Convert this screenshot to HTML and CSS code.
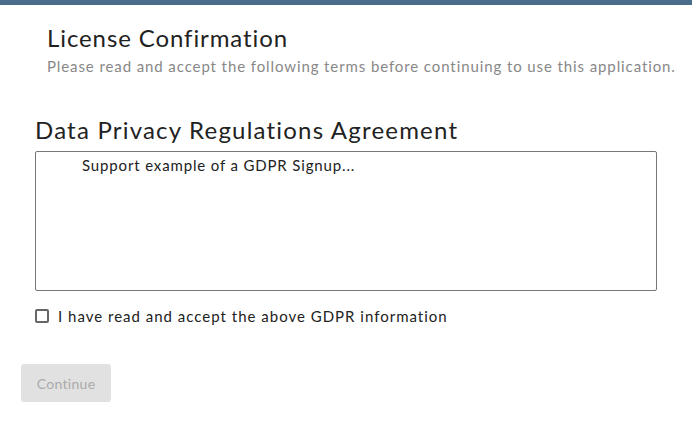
FILE: index.html
```html
<!DOCTYPE html>
<html lang="en">
<head>
  <meta charset="UTF-8">
  <meta name="viewport" content="width=device-width, initial-scale=1">
  <title>License Confirmation</title>
  <link rel="stylesheet" href="styles.css">
</head>
<body>
  <div class="topbar"></div>
  <div class="page">
    <div class="header">
      <h1>License Confirmation</h1>
      <p class="subtitle">Please read and accept the following terms before continuing to use this application.</p>
    </div>
    <div class="agreement">
      <h2>Data Privacy Regulations Agreement</h2>
      <div class="terms-box">
        <p>Support example of a GDPR Signup...</p>
      </div>
      <label class="accept">
        <input type="checkbox" class="accept-check">
        <span>I have read and accept the above GDPR information</span>
      </label>
    </div>
    <button class="continue-btn" disabled>Continue</button>
  </div>
</body>
</html>
```
FILE: styles.css
```css
body {
  margin: 0;
  font-family: Lato, 'Open Sans', sans-serif;
  color: #222;
  background: #fff;
}

.topbar {
  height: 5px;
  background-color: #4a6d8c;
}

.page {
  padding: 0 35px 0 21px;
}

.header {
  padding-left: 26px;
}

h1 {
  margin: 0;
  padding-top: 18px;
  font-size: 24px;
  font-weight: normal;
  line-height: 30px;
  letter-spacing: 0.9px;
}

.subtitle {
  margin: 3px 0 0;
  font-size: 15px;
  line-height: 20px;
  color: #888;
  letter-spacing: 0.9px;
  white-space: nowrap;
}

.agreement {
  padding-left: 14px;
  margin-top: 39px;
}

h2 {
  margin: 0;
  font-size: 24px;
  font-weight: normal;
  line-height: 30px;
  letter-spacing: 1.2px;
}

.terms-box {
  margin-top: 6px;
  height: 138px;
  border: 1px solid #777;
  border-radius: 2px;
}

.terms-box p {
  margin: 0;
  padding: 3px 0 0 46px;
  font-size: 15px;
  line-height: 20px;
  letter-spacing: 0.85px;
}

.accept {
  display: flex;
  align-items: center;
  gap: 9px;
  margin-top: 16px;
  font-size: 15px;
  letter-spacing: 1px;
}

.accept-check {
  appearance: none;
  margin: 0;
  width: 14px;
  height: 14px;
  border: 2px solid #666;
  border-radius: 2px;
  background: #fff;
}

.continue-btn {
  margin-top: 39px;
  width: 90px;
  height: 38px;
  border: none;
  border-radius: 3px;
  background-color: #e1e1e1;
  color: #aaa;
  font-family: inherit;
  font-size: 14px;
  letter-spacing: 0.3px;
}
```
